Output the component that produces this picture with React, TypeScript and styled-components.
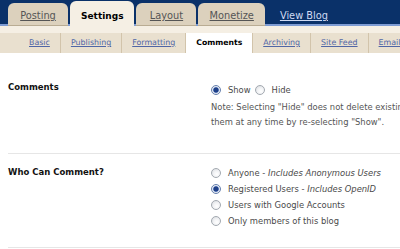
import styled, { createGlobalStyle } from "styled-components";

const GlobalStyle = createGlobalStyle`
  html, body {
    margin: 0;
    padding: 0;
    background: #fff;
    overflow: hidden;
  }
  body {
    font-family: "DejaVu Sans", Verdana, sans-serif;
  }
`;

const Page = styled.div`
  width: 400px;
  height: 249px;
  overflow: hidden;
  background: #fff;
`;

const Header = styled.div`
  display: flex;
  align-items: flex-end;
  height: 26px;
  padding-left: 8px;
  background: #0a3169;
  box-shadow: inset 0 -2px 0 #7d9bd3;
`;

const Tab = styled.a<{ $active?: boolean }>`
  box-sizing: border-box;
  min-width: 60px;
  height: ${(p) => (p.$active ? 25 : 23)}px;
  padding: ${(p) => (p.$active ? 5 : 3)}px 11px 0;
  margin-right: 2px;
  border-radius: 6px 6px 0 0;
  background: ${(p) => (p.$active ? "#f5efe4" : "#dcd1bd")};
  border-bottom: ${(p) => (p.$active ? "none" : "1px solid #b9ac93")};
  text-align: center;
  line-height: ${(p) => (p.$active ? 20 : 19)}px;
  font-size: ${(p) => (p.$active ? 9 : 9.8)}px;
  font-weight: ${(p) => (p.$active ? "bold" : "normal")};
  color: ${(p) => (p.$active ? "#000" : "#555")};
  text-decoration: ${(p) => (p.$active ? "none" : "underline")};
  white-space: nowrap;
`;

const ViewBlog = styled.a`
  margin-left: 13px;
  line-height: 20px;
  font-size: 9.8px;
  color: #cfdaf2;
  text-decoration: underline;
  white-space: nowrap;
`;

const SubNav = styled.div`
  padding-top: 7px;
  background: #f5efe4;
`;

const SubRow = styled.div`
  display: flex;
  height: 20px;
  padding-left: 19px;
  background: #e9e0cf;
`;

const SubTab = styled.a<{ $active?: boolean }>`
  padding: 0 10px;
  line-height: 20px;
  border-right: 1px solid #d2c4ab;
  background: ${(p) => (p.$active ? "#fff" : "transparent")};
  font-size: ${(p) => (p.$active ? 7.7 : 7.9)}px;
  font-weight: ${(p) => (p.$active ? "bold" : "normal")};
  color: ${(p) => (p.$active ? "#000" : "#5066a6")};
  text-decoration: ${(p) => (p.$active ? "none" : "underline")};
  white-space: nowrap;
`;

const Content = styled.div`
  padding-left: 8px;
`;

const Section = styled.div<{ $top: number; $bottom: number }>`
  display: grid;
  grid-template-columns: 200px 1fr;
  padding: ${(p) => p.$top}px 0 ${(p) => p.$bottom}px;
  border-bottom: 1px solid #e6e6e6;
`;

const Label = styled.div`
  font-size: 8.5px;
  font-weight: bold;
  line-height: 14px;
  color: #111;
`;

const Controls = styled.div<{ $shift?: number }>`
  min-width: 0;
  padding-top: ${(p) => p.$shift ?? 0}px;
  padding-left: 3px;
  font-size: 8.4px;
  color: #4a4a4a;
`;

const InlineRow = styled.div`
  display: flex;
  align-items: center;
  height: 14px;
`;

const Option = styled.label<{ $gap?: number }>`
  display: flex;
  align-items: center;
  gap: 7px;
  margin-right: ${(p) => p.$gap ?? 0}px;
  white-space: nowrap;
`;

const StackRow = styled(Option)`
  height: 16px;
`;

const Radio = styled.span<{ $checked?: boolean }>`
  box-sizing: border-box;
  flex: none;
  width: 10px;
  height: 10px;
  border-radius: 50%;
  border: 1px solid ${(p) => (p.$checked ? "#6680ad" : "#a3a9b0")};
  background: ${(p) =>
    p.$checked
      ? "radial-gradient(circle at 50% 50%, #1f3f86 0 2.2px, #5b7cc0 2.6px, #e4e8ee 3.2px, #f6f7f9 100%)"
      : "radial-gradient(circle at 60% 65%, #ffffff 0, #f2f3f5 45%, #d4d7db 100%)"};
`;

const Note = styled.p`
  margin: 3px 0 0;
  line-height: 15px;
  color: #555;
  white-space: nowrap;
`;

const Hint = styled.i`
  font-style: italic;
`;

export default function App() {
  const tabs = ["Posting", "Settings", "Layout", "Monetize"];
  const subTabs = ["Basic", "Publishing", "Formatting", "Comments", "Archiving", "Site Feed", "Email"];
  return (
    <Page>
      <GlobalStyle />
      <Header>
        {tabs.map((t) => (
          <Tab key={t} $active={t === "Settings"}>
            {t}
          </Tab>
        ))}
        <ViewBlog>View Blog</ViewBlog>
      </Header>
      <SubNav>
        <SubRow>
          {subTabs.map((t) => (
            <SubTab key={t} $active={t === "Comments"}>
              {t}
            </SubTab>
          ))}
        </SubRow>
      </SubNav>
      <Content>
        <Section $top={27} $bottom={23}>
          <Label>Comments</Label>
          <Controls $shift={3}>
            <InlineRow>
              <Option $gap={4}>
                <Radio $checked />
                Show
              </Option>
              <Option>
                <Radio />
                Hide
              </Option>
            </InlineRow>
            <Note>
              Note: Selecting "Hide" does not delete existing comments. You can show
              <br />
              them at any time by re-selecting "Show".
            </Note>
          </Controls>
        </Section>
        <Section $top={11} $bottom={18}>
          <Label>Who Can Comment?</Label>
          <Controls>
            <StackRow>
              <Radio />
              <span>
                Anyone - <Hint>Includes Anonymous Users</Hint>
              </span>
            </StackRow>
            <StackRow>
              <Radio $checked />
              <span>
                Registered Users - <Hint>Includes OpenID</Hint>
              </span>
            </StackRow>
            <StackRow>
              <Radio />
              Users with Google Accounts
            </StackRow>
            <StackRow>
              <Radio />
              Only members of this blog
            </StackRow>
          </Controls>
        </Section>
      </Content>
    </Page>
  );
}
